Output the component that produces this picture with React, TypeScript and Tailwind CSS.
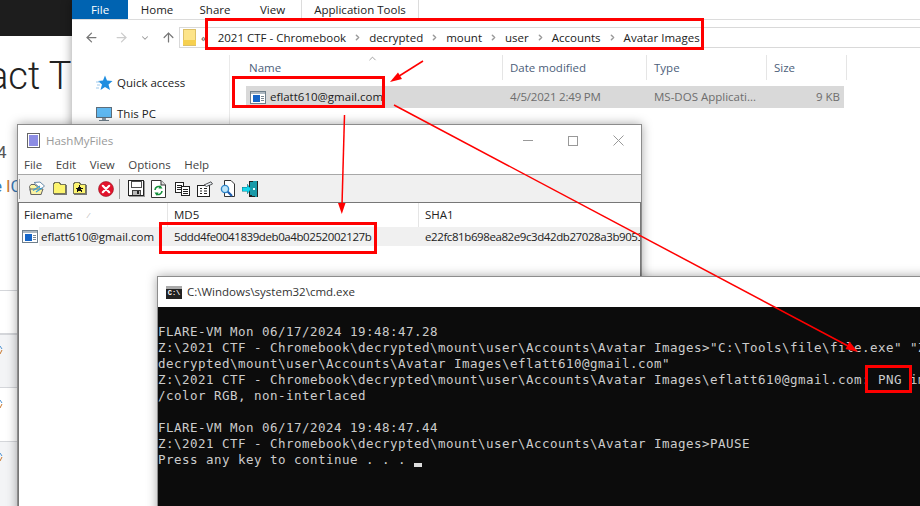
import { ArrowLeft, ArrowRight, ArrowUp, ChevronDown, ChevronRight, ChevronUp } from "lucide-react";

const UI_FONT = "font-['Open_Sans',sans-serif] text-[11.5px]";

// Paths in the file explorer breadcrumb
const CRUMBS = ["2021 CTF - Chromebook", "decrypted", "mount", "user", "Accounts", "Avatar Images"];

const CMD_LINES = [
  "",
  "FLARE-VM Mon 06/17/2024 19:48:47.28",
  'Z:\\2021 CTF - Chromebook\\decrypted\\mount\\user\\Accounts\\Avatar Images>"C:\\Tools\\file\\file.exe" "Z:\\2021 CTF - Chromebook\\',
  'decrypted\\mount\\user\\Accounts\\Avatar Images\\eflatt610@gmail.com"',
  "Z:\\2021 CTF - Chromebook\\decrypted\\mount\\user\\Accounts\\Avatar Images\\eflatt610@gmail.com: PNG image data, 512 x 512, 8-bit",
  "/color RGB, non-interlaced",
  "",
  "FLARE-VM Mon 06/17/2024 19:48:47.44",
  "Z:\\2021 CTF - Chromebook\\decrypted\\mount\\user\\Accounts\\Avatar Images>PAUSE",
];

function AppFileIcon() {
  return (
    <svg width="16" height="13" viewBox="0 0 16 13" shapeRendering="crispEdges" className="shrink-0">
      <rect x="0.5" y="0.5" width="15" height="12" fill="#fff" stroke="#6f7f8c" />
      <rect x="1" y="1" width="14" height="2" fill="#aeb9c2" />
      <rect x="3" y="4" width="7" height="7" fill="#1565c8" />
      <rect x="11" y="5" width="3" height="1" fill="#7a8792" />
      <rect x="11" y="7" width="3" height="1" fill="#7a8792" />
      <rect x="11" y="9" width="3" height="1" fill="#7a8792" />
    </svg>
  );
}

function FolderIcon({ star }: { star?: boolean }) {
  return (
    <svg width="16" height="15" viewBox="0 0 16 15" shapeRendering="crispEdges">
      <path d="M1.5 3.5 L2.5 1.5 H7.5 L8.5 3.5 H13.5 V12.5 H1.5 Z" fill="#fdf56e" stroke="#77775a" />
      <rect x="14" y="4" width="1" height="10" fill="#777" />
      <rect x="2" y="13" width="13" height="1" fill="#777" />
      {star && <path d="M7.5 4 L8.7 6.6 L11.5 6.8 L9.4 8.6 L10.2 11.5 L7.5 9.9 L4.8 11.5 L5.6 8.6 L3.5 6.8 L6.3 6.6 Z" fill="#111" />}
    </svg>
  );
}

function HashToolbarIcons() {
  return (
    <div className="flex items-center h-full">
      <div className="w-[2px] h-[20px] border-l border-[#a0a0a0] ml-[1px] mr-[7px]" />
      {/* open */}
      <svg width="18" height="16" viewBox="0 0 18 16" className="mr-[6px]">
        <path d="M1.5 5.5 L3 3.5 H7 L8 5 H13 V13.5 H3 Z" fill="#fdf7a0" stroke="#666" />
        <path d="M6 1.5 L12 1 L16.5 5 L13 8 Z" fill="#fff" stroke="#6b8caa" />
        <path d="M2 8 H15 L13 13.5 H3 Z" fill="#fbf3a4" stroke="#666" />
        <path d="M5 9.5 L12 5 M8 11 L14 7" stroke="#3aa0d8" strokeWidth="1.2" />
      </svg>
      <div className="mr-[4px]"><FolderIcon /></div>
      <div className="mr-[10px]"><FolderIcon star /></div>
      {/* remove */}
      <svg width="16" height="16" viewBox="0 0 16 16" className="mr-[5px]">
        <circle cx="8" cy="8" r="7.5" fill="#e3132c" stroke="#8f1a24" strokeWidth="0.6" />
        <path d="M4.8 4.8 L11.2 11.2 M11.2 4.8 L4.8 11.2" stroke="#fff" strokeWidth="2.2" strokeLinecap="round" />
      </svg>
      <div className="w-[2px] h-[20px] border-l border-[#a0a0a0] mr-[7px]" />
      {/* save */}
      <svg width="17" height="17" viewBox="0 0 17 17" shapeRendering="crispEdges" className="mr-[6px]">
        <rect x="1" y="1" width="16" height="16" fill="#999" />
        <rect x="0.5" y="0.5" width="15" height="15" fill="#fff" stroke="#222" />
        <rect x="3" y="1" width="10" height="6" fill="#fff" stroke="#222" strokeWidth="0.8" />
        <rect x="4" y="10" width="8" height="5" fill="#bbb" stroke="#222" strokeWidth="0.8" />
        <rect x="9" y="11" width="2" height="3" fill="#222" />
      </svg>
      {/* refresh */}
      <svg width="15" height="18" viewBox="0 0 15 18" className="mr-[9px]">
        <path d="M0.5 0.5 H10 L14.5 5 V17.5 H0.5 Z" fill="#fff" stroke="#333" />
        <path d="M10 0.5 V5 H14.5" fill="#ddd" stroke="#333" />
        <path d="M4 10 A3.6 3.6 0 0 1 10 7.5" fill="none" stroke="#15903c" strokeWidth="1.6" />
        <path d="M11 11 A3.6 3.6 0 0 1 5 13.5" fill="none" stroke="#15903c" strokeWidth="1.6" />
        <path d="M9 5 L11.5 8.5 L7.5 8.5 Z M6 16 L3.5 12.5 L7.5 12.5 Z" fill="#15903c" />
      </svg>
      {/* copy */}
      <svg width="15" height="14" viewBox="0 0 15 14" shapeRendering="crispEdges" className="mr-[7px]">
        <rect x="0.5" y="0.5" width="8" height="10" fill="#fff" stroke="#222" />
        <rect x="2" y="3" width="5" height="1" fill="#222" />
        <rect x="2" y="5" width="5" height="1" fill="#222" />
        <rect x="2" y="7" width="5" height="1" fill="#222" />
        <rect x="6.5" y="4.5" width="8" height="9" fill="#fff" stroke="#222" />
        <rect x="8" y="7" width="5" height="1" fill="#222" />
        <rect x="8" y="9" width="5" height="1" fill="#222" />
        <rect x="8" y="11" width="5" height="1" fill="#222" />
      </svg>
      {/* properties */}
      <svg width="16" height="16" viewBox="0 0 16 16" className="mr-[7px]">
        <rect x="0.5" y="4.5" width="12" height="11" fill="#fff" stroke="#222" />
        <path d="M3 7.5 H5 M7 7.5 H10 M3 10 H5 M7 10 H10 M3 12.5 H5 M7 12.5 H10" stroke="#222" />
        <path d="M7 4 L14 0.8 L15.5 3 L9.5 5.5 Z" fill="#e8eef5" stroke="#333" strokeWidth="0.8" />
      </svg>
      {/* find */}
      <svg width="16" height="18" viewBox="0 0 16 18" className="mr-[6px]">
        <path d="M4.5 0.5 H11 L14.5 4 V16.5 H4.5 Z" fill="#fff" stroke="#333" />
        <circle cx="5" cy="9" r="3.6" fill="#bfe6fa" stroke="#2f86c8" strokeWidth="1.4" />
        <path d="M7.8 11.8 L12 16" stroke="#1f5fb0" strokeWidth="2.2" />
      </svg>
      {/* exit */}
      <svg width="17" height="18" viewBox="0 0 17 18" shapeRendering="crispEdges">
        <rect x="7" y="1" width="9" height="16" fill="#222" />
        <path d="M8 2 L15 1 V17 L8 15 Z" fill="#1a9aa8" />
        <rect x="11" y="8" width="2" height="2" fill="#e6fbff" />
        <path d="M0 7 H5 V4 L9 9 L5 14 V11 H0 Z" fill="#12d6ec" stroke="#0c7886" strokeWidth="0.5" />
      </svg>
    </div>
  );
}

// Page that sits behind all the windows, only its left edge is visible
function BackgroundPage() {
  return (
    <div className="absolute inset-0 bg-white flex flex-col">
      <div className="h-[36px] bg-[#1d1d1d] shrink-0" />
      <div className="h-[62px] shrink-0 overflow-hidden w-[72px] flex items-end">
        <div className="font-['Roboto',sans-serif] font-light text-[38px] leading-[44px] text-[#222] whitespace-pre -ml-[12px]">act T</div>
      </div>
      <div className="h-[192px] shrink-0 w-[17px] overflow-hidden pt-[44px] font-['Roboto',sans-serif] text-[17px] leading-[20px]">
        <div className="text-[#555] -ml-[3px]">4</div>
        <div className="mt-[14px] whitespace-pre text-[#3a78b5] -ml-[7px]">
          e <span className="text-[#c9772e]">l</span>C
        </div>
      </div>
      <div className="w-[17px] flex flex-col">
        <div className="h-[43px] border-t border-[#d4d6da] bg-white" />
        <div className="h-[54px] border-t-2 border-[#d4d6da] bg-[#f3f4f6] pt-[11px]"><RowMark /></div>
        <div className="h-[54px] border-t border-[#d4d6da] bg-white pt-[12px]"><RowMark /></div>
        <div className="h-[65px] border-t border-[#d4d6da] bg-[#f3f4f6] pt-[11px]"><RowMark /></div>
      </div>
    </div>
  );
}

function RowMark() {
  return (
    <svg width="3" height="9" viewBox="0 0 3 9">
      <path d="M0 0 L2 3" stroke="#4a90d0" strokeWidth="1" />
      <path d="M0 8 L2 4" stroke="#c9772e" strokeWidth="1" />
    </svg>
  );
}

function ExplorerWindow() {
  return (
    <div className={`absolute left-[72px] top-0 w-[860px] h-[400px] bg-white text-[#222] shadow-[0_0_10px_rgba(0,0,0,0.4)] ${UI_FONT}`}>
      {/* Ribbon tabs */}
      <div className="flex h-[20px] border-b border-[#dcdcdc]">
        <div className="w-[56px] h-[19px] bg-[#0063b1] text-white flex items-center justify-center">File</div>
        <div className="w-[58px] flex items-center justify-center">Home</div>
        <div className="w-[58px] flex items-center justify-center">Share</div>
        <div className="w-[58px] flex items-center justify-center border-r border-[#dcdcdc]">View</div>
        <div className="w-[117px] flex items-center justify-center border-r border-[#dcdcdc]">Application Tools</div>
      </div>
      {/* Address row */}
      <div className="flex h-[35px] items-start pt-[7px]">
        <div className="w-[107px] h-[21px] flex items-center shrink-0 pl-[12px] text-[#777]">
          <ArrowLeft size={15} strokeWidth={2} />
          <ArrowRight size={15} strokeWidth={2} className="ml-[15px] text-[#ccc]" />
          <ChevronDown size={10} strokeWidth={2.5} className="ml-[11px] text-[#999]" />
          <ArrowUp size={15} strokeWidth={2} className="ml-[11px]" />
        </div>
        <div className="flex-1 h-[21px] border-y border-l border-[#d9d9d9] flex items-center pl-[3px]">
          <svg width="13" height="17" viewBox="0 0 13 17" shapeRendering="crispEdges" className="shrink-0">
            <rect x="0.5" y="0.5" width="12" height="16" fill="#fde489" stroke="#dcc067" />
            <rect x="0" y="11" width="13" height="5" fill="#f6d04f" />
          </svg>
          <span className="ml-[5px] mr-[11px] text-[#555] leading-none">«</span>
          <div className="flex items-center gap-[7px] whitespace-nowrap">
            {CRUMBS.map((crumb, i) => (
              <div key={crumb} className="flex items-center gap-[7px]">
                {i > 0 && <ChevronRight size={9} strokeWidth={4} className="text-[#9a9a9a]" />}
                <span>{crumb}</span>
              </div>
            ))}
          </div>
        </div>
      </div>
      {/* Body */}
      <div className="flex h-[345px]">
        <div className="w-[158px] border-r border-[#eaeaea] shrink-0 pt-[18px] pl-[24px]">
          <div className="flex items-center gap-[4px] h-[20px]">
            <svg width="17" height="16" viewBox="0 0 17 16">
              <path d="M9 0.5 L11 5.5 L16.5 6 L12.5 9.5 L14 15 L9 12 L4.5 15 L6 9.5 L2 6 L7 5.5 Z" fill="#1f8ee0" />
              <path d="M0 7 H4 M1 10 H4 M0 13 H3" stroke="#9cc9ec" />
            </svg>
            <span>Quick access</span>
          </div>
          <div className="flex items-center gap-[5px] h-[20px] mt-[11px]">
            <svg width="16" height="15" viewBox="0 0 16 15" shapeRendering="crispEdges">
              <rect x="0.5" y="0.5" width="15" height="10" fill="#5fb8f0" stroke="#5d6d7a" />
              <rect x="6" y="11" width="4" height="2" fill="#8a98a4" />
              <rect x="3" y="13" width="10" height="1" fill="#6f7f8c" />
            </svg>
            <span>This PC</span>
          </div>
        </div>
        <div className="flex-1 relative">
          <ChevronUp size={11} strokeWidth={1.5} className="absolute left-[137px] -top-[2px] text-[#777]" />
          <div className="flex h-[25px] text-[#4c607a]">
            <div className="w-[273px] border-r border-[#e5e5e5] pl-[19px] flex items-center">Name</div>
            <div className="w-[144px] border-r border-[#e5e5e5] pl-[7px] flex items-center">Date modified</div>
            <div className="w-[120px] border-r border-[#e5e5e5] pl-[7px] flex items-center">Type</div>
            <div className="w-[80px] border-r border-[#e5e5e5] pl-[7px] flex items-center">Size</div>
          </div>
          <div className="flex h-[22px] w-[598px] ml-[16px] mt-[6px] bg-[#d9d9d9] items-center">
            <div className="w-[264px] pl-[4px] flex items-center gap-[4px]">
              <AppFileIcon />
              <span>eflatt610@gmail.com</span>
            </div>
            <div className="w-[144px] text-[#6d6d6d] tracking-[-0.2px]">4/5/2021 2:49 PM</div>
            <div className="w-[120px] text-[#6d6d6d]">MS-DOS Applicati...</div>
            <div className="flex-1 text-right pr-[4px] text-[#6d6d6d]">9 KB</div>
          </div>
        </div>
      </div>
    </div>
  );
}

function HashWindow() {
  return (
    <div className={`absolute left-[17px] top-[124px] w-[625px] h-[400px] flex flex-col bg-white border border-[#8c8c8c] shadow-[0_0_10px_rgba(0,0,0,0.35)] text-[#222] ${UI_FONT}`}>
      {/* Title bar */}
      <div className="flex items-center h-[31px] shrink-0">
        <svg width="13" height="15" viewBox="0 0 13 15" shapeRendering="crispEdges" className="ml-[9px] shrink-0">
          <rect x="0.5" y="0.5" width="12" height="14" fill="#fff" stroke="#666" />
          <rect x="2" y="2" width="9" height="11" fill="#3f3fd0" opacity="0.6" />
        </svg>
        <span className="ml-[6px] text-[#999]">HashMyFiles</span>
        <div className="ml-auto flex items-center text-[#8a8a8a]">
          <div className="w-[10px] h-px bg-[#999]" />
          <div className="ml-[35px] w-[10px] h-[10px] border border-[#999]" />
          <svg width="11" height="11" viewBox="0 0 11 11" className="ml-[35px] mr-[17px]">
            <path d="M0.5 0.5 L10.5 10.5 M10.5 0.5 L0.5 10.5" stroke="#999" />
          </svg>
        </div>
      </div>
      {/* Menu */}
      <div className="flex h-[19px] shrink-0 items-center gap-[13.5px] pl-[6px] border-b border-[#a8a8a8] text-[#444]">
        <span>File</span>
        <span>Edit</span>
        <span>View</span>
        <span>Options</span>
        <span>Help</span>
      </div>
      {/* Toolbar */}
      <div className="h-[28px] shrink-0 bg-[#f0f0f0] border-b border-[#777] flex items-center">
        <HashToolbarIcons />
      </div>
      {/* File list */}
      <div className="flex-1 w-[623px] overflow-hidden border-x border-[#777] bg-white">
        <div className="flex h-[24px]">
          <div className="w-[149px] border-r border-[#e5e5e5] pl-[5px] flex items-center relative">
            Filename
            <span className="absolute left-[69px] top-[8px] text-[8px] leading-none text-[#aaa]">⁄</span>
          </div>
          <div className="w-[251px] border-r border-[#e5e5e5] pl-[6px] flex items-center">MD5</div>
          <div className="pl-[6px] flex items-center">SHA1</div>
        </div>
        <div className="flex h-[19px] items-center whitespace-nowrap">
          <div className="w-[20px] flex justify-end pr-[1px] shrink-0"><AppFileIcon /></div>
          <div className="w-[129px] bg-[#f0f0f0] h-full flex items-center pl-[2px] shrink-0">eflatt610@gmail.com</div>
          <div className="w-[251px] bg-[#f0f0f0] h-full flex items-center pl-[6px] shrink-0 tracking-[-0.41px]">5ddd4fe0041839deb0a4b0252002127b</div>
          <div className="flex-1 bg-[#f0f0f0] h-full flex items-center pl-[6px] overflow-hidden tracking-[-0.41px]">e22fc81b698ea82e9c3d42db27028a3b9053</div>
        </div>
      </div>
    </div>
  );
}

function CmdWindow() {
  return (
    <div className="absolute left-[157px] top-[276px] w-[780px] h-[240px] border border-[#8c8c8c] shadow-[0_0_10px_rgba(0,0,0,0.35)] bg-[#0c0c0c]">
      <div className={`h-[30px] bg-white flex items-center pl-[8px] text-[#333] ${UI_FONT}`}>
        <div className="w-[16px] h-[13px] bg-[#222] border-t-[3px] border-[#aaa] flex items-center justify-center font-['Liberation_Mono',monospace] text-[7px] leading-none text-white font-bold shrink-0">C:\</div>
        <span className="ml-[5px]">C:\Windows\system32\cmd.exe</span>
      </div>
      <div className="pt-[1px] font-['DejaVu_Sans_Mono',monospace] text-[12.5px] tracking-[0.475px] leading-[16px] text-[#cccccc] whitespace-pre overflow-hidden">
        {CMD_LINES.map((line, i) => (
          <div key={i} className="h-[16px]">{line}</div>
        ))}
        <div className="h-[16px]">
          Press any key to continue . . . <span className="inline-block w-[8px] h-[4px] bg-[#dddddd] align-[-3px]" />
        </div>
      </div>
    </div>
  );
}

// Red annotations drawn on top of the screenshot
function Annotations() {
  return (
    <>
      <div className="absolute left-[205px] top-[18px] w-[499px] h-[32px] border-[3px] border-[#ff0000]" />
      <div className="absolute left-[232px] top-[76px] w-[153px] h-[32px] border-[3px] border-[#ff0000]" />
      <div className="absolute left-[159px] top-[222px] w-[218px] h-[32px] border-[3px] border-[#ff0000]" />
      <div className="absolute left-[865px] top-[365px] w-[47px] h-[28px] border-[3px] border-[#ff0000]" />
      <svg width="920" height="506" viewBox="0 0 920 506" className="absolute inset-0 pointer-events-none">
        <path d="M423 61 L396 78" stroke="#ff0000" strokeWidth="1.5" fill="none" />
        <path d="M390 82 L398 72.5 L402 79 Z" fill="#ff0000" />
        <path d="M344.5 115 L342 205" stroke="#ff0000" strokeWidth="1.5" fill="none" />
        <path d="M341.8 214 L338 203 L345.5 203 Z" fill="#ff0000" />
        <path d="M394 105 L850 347" stroke="#ff0000" strokeWidth="1.5" fill="none" />
        <path d="M858 352 L845.5 349 L849.5 341.5 Z" fill="#ff0000" />
      </svg>
    </>
  );
}

export default function App() {
  return (
    <div className="relative w-[920px] h-[506px] overflow-hidden bg-white">
      <BackgroundPage />
      <ExplorerWindow />
      <HashWindow />
      <CmdWindow />
      <Annotations />
    </div>
  );
}
